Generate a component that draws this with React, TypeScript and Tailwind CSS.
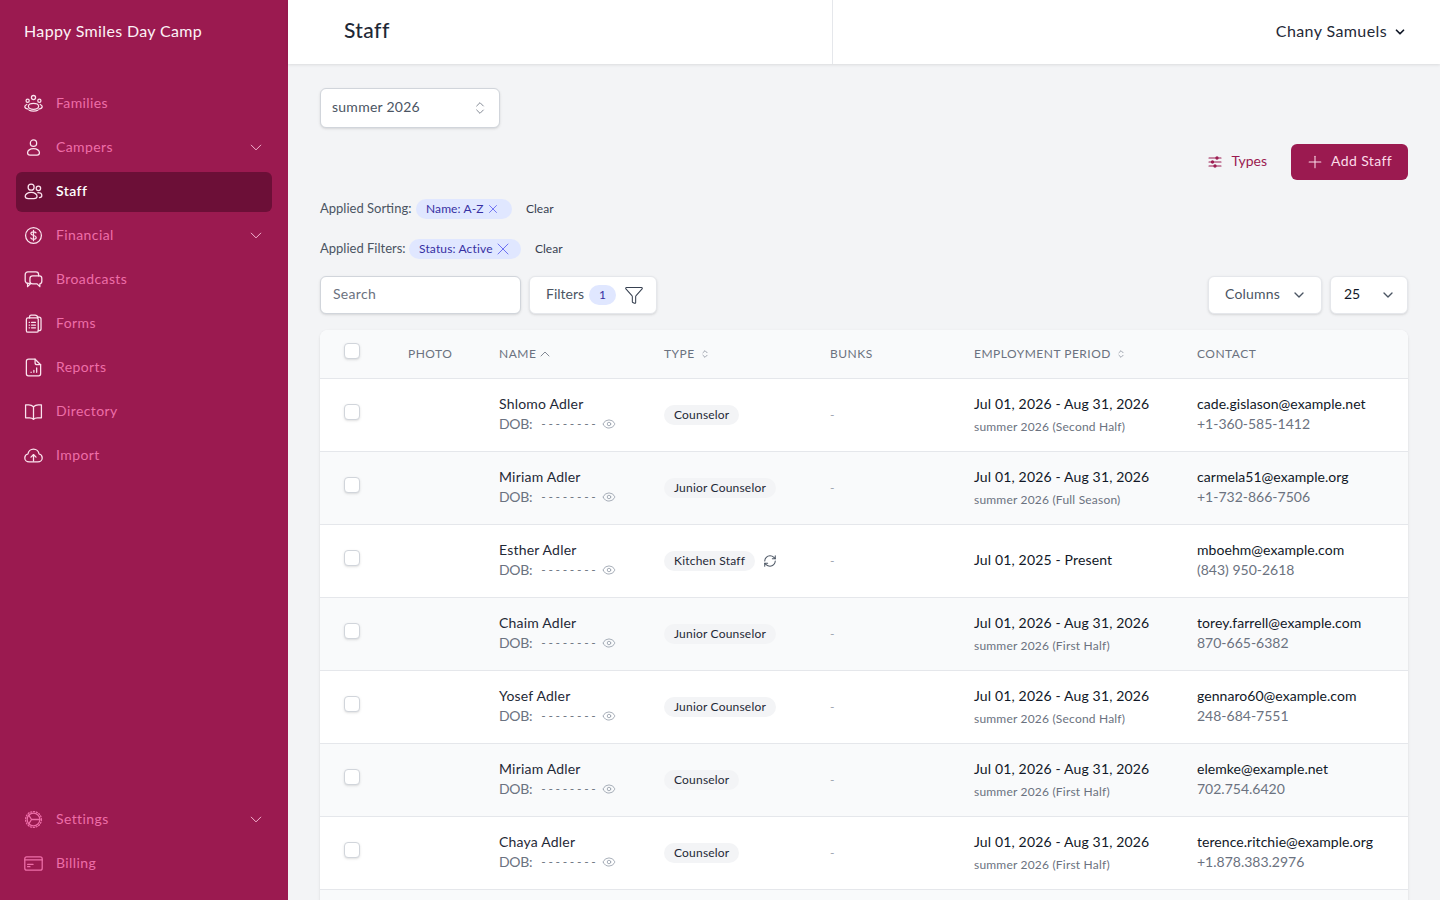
import React from 'react';
import { ChevronDown, ChevronUp, ChevronsUpDown, Eye, Filter, Plus, RefreshCw, X } from 'lucide-react';

const Ico = ({ children }: { children: React.ReactNode }) => (
  <svg viewBox="0 0 24 24" fill="none" stroke="currentColor" strokeWidth="1.6" strokeLinecap="round" strokeLinejoin="round" className="w-[19px] h-[19px]">
    {children}
  </svg>
);

const FamiliesIcon = () => (
  <Ico>
    <circle cx="12" cy="4.500" r="2.600" />
    <circle cx="4.600" cy="8.600" r="2" />
    <circle cx="19.400" cy="8.600" r="2" />
    <ellipse cx="12" cy="15.500" rx="6.500" ry="3.800" />
    <path d="M3.500 13.200C2 14 1 15 1 16c0 1.400 1.800 2.600 4.400 3M20.500 13.200c1.500.8 2.500 1.800 2.500 2.800 0 1.400-1.800 2.600-4.400 3" />
    <path d="M6.500 20.500c1.500.7 3.400 1 5.500 1s4-.3 5.500-1" />
  </Ico>
);
const CampersIcon = () => (
  <Ico>
    <circle cx="12" cy="6.500" r="4" />
    <path d="M12 13.500c-4.500 0-7.500 2.300-7.500 5 0 1.700 1.200 3 3 3h9c1.800 0 3-1.300 3-3 0-2.700-3-5-7.500-5z" />
  </Ico>
);
const StaffIcon = () => (
  <Ico>
    <circle cx="9" cy="6.500" r="3.800" />
    <circle cx="18.200" cy="8" r="2.800" />
    <path d="M9 13.200c-4.400 0-7.500 2.300-7.500 4.800 0 2 1.800 3 4 3h7c2.200 0 4-1 4-3 0-2.500-3.100-4.800-7.500-4.800z" />
    <path d="M17.500 13.500c3 0 5 1.500 5 3.600 0 1.700-1.300 2.600-3 2.700" />
  </Ico>
);
const FinancialIcon = () => (
  <Ico>
    <circle cx="12" cy="12" r="10" />
    <path d="M12 5.500v13M15.200 8.600c-.5-.8-1.700-1.300-3.200-1.300-1.900 0-3.300.9-3.300 2.300 0 3.300 6.700 1.500 6.700 4.800 0 1.400-1.500 2.300-3.400 2.300-1.600 0-2.900-.6-3.400-1.500" />
  </Ico>
);
const BroadcastsIcon = () => (
  <Ico>
    <path d="M7 17H5.500c-2 0-4-1.500-4-3.500V6c0-2 1.500-3.500 3.500-3.500h10c2 0 3.500 1.500 3.500 3.500v1.500" />
    <path d="M4.500 17v4l4-4" />
    <path d="M11 7.500h8.500c1.800 0 3 1.300 3 3.200v3.600c0 1.800-1 3-2.500 3.200v3.500l-3.500-3.500H11c-2 0-3.500-1.200-3.500-3V10.700c0-1.900 1.500-3.200 3.500-3.200z" />
  </Ico>
);
const FormsIcon = () => (
  <Ico>
    <path d="M17 4h2c1.500 0 2.500 1 2.500 2.500v12c0 1.500-1 2.500-2.500 2.500h-1" />
    <rect x="3" y="5" width="15" height="18" rx="2" />
    <path d="M7 5V3.500C7 2.500 8 1.500 9 1.500h5c1.500 0 3 1 3.500 3" />
    <path d="M6.500 10.500h.5M9.500 10.500h5M6.500 14h.5M9.500 14h5M6.500 17.500h.5M9.500 17.500h5" />
  </Ico>
);
const ReportsIcon = () => (
  <Ico>
    <path d="M6 1.500h8l7 7V20c0 1.500-1 2.500-2.500 2.500h-13C4 22.500 3 21.500 3 20V4c0-1.500 1.500-2.500 3-2.500z" />
    <path d="M14 1.500V6c0 1.500 1 2.500 2.500 2.500H21" />
    <path d="M9 18v.2M12.500 15.500V18M16 12.500V18" />
  </Ico>
);
const DirectoryIcon = () => (
  <Ico>
    <path d="M12 6c-1.500-1.500-3.500-2.500-6-2.500H2V20h5c2 0 3.800.5 5 1.800 1.200-1.300 3-1.800 5-1.800h5V3.500h-4c-2.500 0-4.500 1-6 2.500z" />
    <path d="M12 6v15.800" />
  </Ico>
);
const ImportIcon = () => (
  <Ico>
    <path d="M6.500 20C3.500 20 1 17.800 1 15c0-2.400 1.700-4.400 4-4.900C5.500 6.600 8.500 4 12 4s6.500 2.600 7 6.100c2.300.5 4 2.500 4 4.900 0 2.800-2.500 5-5.500 5z" />
    <path d="M12 19v-8M8.800 14l3.200-3.200 3.200 3.200" />
  </Ico>
);
const SettingsIcon = () => (
  <Ico>
    <circle cx="12" cy="12" r="8" />
    <circle cx="12" cy="12" r="10" strokeDasharray="1.400 2.200" />
    <path d="M9.500 12L6 6.500M9.500 12H20M9.500 12L6 17.500" />
  </Ico>
);
const BillingIcon = () => (
  <Ico>
    <rect x="1" y="3.500" width="22" height="17" rx="2.500" />
    <path d="M1 7.500h22M4.500 13h7M4.500 16h3" />
  </Ico>
);

const TypesIcon = () => (
  <svg viewBox="0 0 14 14" fill="none" stroke="currentColor" strokeWidth="1.100" strokeLinecap="round" className="w-[14px] h-[14px] mr-[9px]">
    <path d="M1 3h12M1 7h12M1 11h12" />
    <circle cx="9" cy="3" r="1.100" fill="currentColor" />
    <circle cx="4.500" cy="7" r="1.100" fill="currentColor" />
    <circle cx="7" cy="11" r="1.100" fill="currentColor" />
  </svg>
);

const NavItem = ({ icon, label, open, active, dim }: { icon: React.ReactNode; label: string; open?: boolean; active?: boolean; dim?: boolean }) => (
  <div className={`flex items-center h-10 px-2 rounded-md ${active ? 'bg-[#6c0f37] text-white font-semibold' : 'text-[#ee6ea8]'}`}>
    <span className={`w-8 flex items-center pb-[2px] ${dim ? 'text-[#ee6ea8]' : 'text-[#fbe3ee]'}`}>{icon}</span>
    <span className="text-[14px] tracking-[0.4px] pb-1">{label}</span>
    {open && <ChevronDown className="ml-auto -mr-[2px] w-5 h-5 text-[#f5b5d0] pb-[1px]" strokeWidth={1.25} />}
  </div>
);

type Staff = { name: string; type: string; from: string; season?: string; email: string; phone: string; sync?: boolean };

const staff: Staff[] = [
  { name: 'Shlomo Adler', type: 'Counselor', from: 'Jul 01, 2026 - Aug 31, 2026', season: 'summer 2026 (Second Half)', email: 'cade.gislason@example.net', phone: '+1-360-585-1412' },
  { name: 'Miriam Adler', type: 'Junior Counselor', from: 'Jul 01, 2026 - Aug 31, 2026', season: 'summer 2026 (Full Season)', email: 'carmela51@example.org', phone: '+1-732-866-7506' },
  { name: 'Esther Adler', type: 'Kitchen Staff', sync: true, from: 'Jul 01, 2025 - Present', email: 'mboehm@example.com', phone: '(843) 950-2618' },
  { name: 'Chaim Adler', type: 'Junior Counselor', from: 'Jul 01, 2026 - Aug 31, 2026', season: 'summer 2026 (First Half)', email: 'torey.farrell@example.com', phone: '870-665-6382' },
  { name: 'Yosef Adler', type: 'Junior Counselor', from: 'Jul 01, 2026 - Aug 31, 2026', season: 'summer 2026 (Second Half)', email: 'gennaro60@example.com', phone: '248-684-7551' },
  { name: 'Miriam Adler', type: 'Counselor', from: 'Jul 01, 2026 - Aug 31, 2026', season: 'summer 2026 (First Half)', email: 'elemke@example.net', phone: '702.754.6420' },
  { name: 'Chaya Adler', type: 'Counselor', from: 'Jul 01, 2026 - Aug 31, 2026', season: 'summer 2026 (First Half)', email: 'terence.ritchie@example.org', phone: '+1.878.383.2976' },
];

const Checkbox = () => <div className="w-4 h-4 rounded-[4px] bg-white border border-[#d1d5db] shadow-sm" />;

export default function App() {
  return (
    <div className="flex h-screen overflow-hidden bg-[#f3f4f6] font-['Lato','Liberation_Sans',sans-serif] text-[#111827]">
      {/* Sidebar */}
      <aside className="w-[288px] shrink-0 h-full bg-[#9b1a50] flex flex-col">
        <div className="h-16 flex items-center px-6 text-[16px] text-[#fdf2f7] tracking-[0.35px] shrink-0 pb-[3px]">Happy Smiles Day Camp</div>
        <nav className="flex flex-col gap-1 px-4 pt-5">
          <NavItem icon={<FamiliesIcon />} label="Families" />
          <NavItem icon={<CampersIcon />} label="Campers" open />
          <NavItem icon={<StaffIcon />} label="Staff" active />
          <NavItem icon={<FinancialIcon />} label="Financial" open />
          <NavItem icon={<BroadcastsIcon />} label="Broadcasts" />
          <NavItem icon={<FormsIcon />} label="Forms" />
          <NavItem icon={<ReportsIcon />} label="Reports" />
          <NavItem icon={<DirectoryIcon />} label="Directory" />
          <NavItem icon={<ImportIcon />} label="Import" />
        </nav>
        <div className="mt-auto flex flex-col gap-1 px-4 pb-[16px]">
          <NavItem icon={<SettingsIcon />} label="Settings" open dim />
          <NavItem icon={<BillingIcon />} label="Billing" dim />
        </div>
      </aside>

      <div className="flex-1 min-w-0 h-full flex flex-col">
        {/* Header */}
        <header className="h-16 shrink-0 bg-white shadow-[0_1px_3px_rgba(0,0,0,0.1)] flex items-center z-10">
          <div className="w-[545px] h-full flex items-center pl-14 pb-1 border-r border-[#e5e7eb] text-[21px] font-medium tracking-[0.4px] text-[#1f2937]">Staff</div>
          <div className="ml-auto flex items-center pr-[33px] text-[16px] text-[#1f2937] tracking-[0.4px]">
            <span className="pb-[3px]">Chany Samuels</span>
            <ChevronDown className="ml-[6px] w-[14px] h-[14px] text-[#111827]" strokeWidth={3} />
          </div>
        </header>

        {/* Content */}
        <main className="flex-1 min-h-0 overflow-hidden px-8 pt-6">
          <div className="w-[180px] h-10 bg-white border border-[#d1d5db] rounded-md shadow-sm flex items-center justify-between pl-[11px] pr-[11px] text-[14px] text-[#4b5563] tracking-[0.25px]">
            <span className="pb-1">summer 2026</span>
            <ChevronsUpDown className="w-4 h-4 text-[#6b7280]" strokeWidth={1.25} />
          </div>

          <div className="mt-4 h-9 flex items-center justify-end">
            <div className="flex items-center text-[14px] text-[#9b1a50]">
              <TypesIcon />
              <span className="pb-[3px]">Types</span>
            </div>
            <button className="ml-6 w-[117px] h-9 bg-[#9b1a50] rounded-md flex items-center pl-[14px] text-[14px] text-[#fbdce9] tracking-[0.4px]">
              <Plus className="w-5 h-5 mr-[6px]" strokeWidth={1.25} />
              <span className="pb-[3px]">Add Staff</span>
            </button>
          </div>

          <div className="mt-[17px] h-6 flex items-center text-[13px] text-[#4b5563]">
            <span className="w-[96px]">Applied Sorting:</span>
            <span className="w-[96px] h-5 rounded-full bg-[#e0e7ff] text-[#3730a3] text-[12px] tracking-[0.1px] flex items-center pl-[10px]">
              Name: A-Z
              <X className="w-[14px] h-[14px] ml-[3px] text-[#6366f1]" strokeWidth={1.5} />
            </span>
            <span className="ml-[14px] text-[12px] text-[#374151]">Clear</span>
          </div>
          <div className="mt-4 h-6 flex items-center text-[13px] text-[#4b5563]">
            <span className="w-[89px]">Applied Filters:</span>
            <span className="w-[112px] h-5 rounded-full bg-[#e0e7ff] text-[#3730a3] text-[12px] tracking-[0.15px] flex items-center pl-[10px]">
              Status: Active
              <X className="w-5 h-5 text-[#6366f1]" strokeWidth={1.1} />
            </span>
            <span className="ml-[14px] text-[12px] text-[#374151]">Clear</span>
          </div>

          <div className="mt-[15px] flex items-center h-[38px]">
            <div className="w-[201px] h-full bg-white border border-[#d1d5db] rounded-md shadow-sm flex items-center px-3 text-[14px] text-[#6b7280] tracking-[0.3px]">
              <span className="pb-1">Search</span>
            </div>
            <div className="ml-2 w-[128px] h-full bg-white border border-[#e5e7eb] rounded-md shadow-sm flex items-center pl-4 text-[14px] text-[#4b5563]">
              <span className="pb-1">Filters</span>
              <span className="ml-[5px] w-[27px] h-5 rounded-full bg-[#e0e7ff] text-[#3730a3] text-[12px] flex items-center justify-center">1</span>
              <Filter className="ml-[8px] w-5 h-5 text-[#374151]" strokeWidth={1.25} />
            </div>
            <div className="ml-auto w-[114px] h-full bg-white border border-[#e5e7eb] rounded-md shadow-sm flex items-center justify-between pl-4 pr-[14px] text-[14px] text-[#4b5563] tracking-[0.2px]">
              <span className="pb-1">Columns</span>
              <ChevronDown className="w-4 h-4 text-[#4b5563]" strokeWidth={2} />
            </div>
            <div className="ml-2 w-[78px] h-full bg-white border border-[#e5e7eb] rounded-md shadow-sm flex items-center justify-between pl-[13px] pr-[11px] text-[14px] text-[#111827]">
              <span className="pb-1">25</span>
              <ChevronDown className="w-4 h-4 text-[#4b5563]" strokeWidth={2} />
            </div>
          </div>

          {/* Table */}
          <div className="mt-4 bg-white rounded-lg shadow-sm overflow-hidden">
            <table className="w-full table-fixed border-collapse">
              <colgroup>
                <col className="w-[88px]" />
                <col className="w-[91px]" />
                <col className="w-[165px]" />
                <col className="w-[166px]" />
                <col className="w-[144px]" />
                <col className="w-[223px]" />
                <col />
              </colgroup>
              <thead>
                <tr className="h-12 bg-[#f9fafb] border-b border-[#e5e7eb] text-left text-[12px] text-[#6b7280] tracking-[0.5px]">
                  <th className="pl-6 font-normal pb-[6px]"><Checkbox /></th>
                  <th className="font-normal">PHOTO</th>
                  <th className="font-normal">
                    <span className="flex items-center">NAME<ChevronUp className="ml-[1px] w-4 h-4" strokeWidth={1.25} /></span>
                  </th>
                  <th className="font-normal">
                    <span className="flex items-center">TYPE<ChevronsUpDown className="ml-[5px] w-[10px] h-[10px]" strokeWidth={1.5} /></span>
                  </th>
                  <th className="font-normal">BUNKS</th>
                  <th className="font-normal">
                    <span className="flex items-center">EMPLOYMENT PERIOD<ChevronsUpDown className="ml-[5px] w-[10px] h-[10px]" strokeWidth={1.5} /></span>
                  </th>
                  <th className="font-normal">CONTACT</th>
                </tr>
              </thead>
              <tbody>
                {staff.map((s, i) => (
                  <tr key={i} className={`h-[73px] border-b border-[#e5e7eb] ${i % 2 === 1 ? 'bg-[#f9fafb]' : 'bg-white'}`}>
                    <td className="pl-6 pb-[6px]"><Checkbox /></td>
                    <td />
                    <td className="pb-[2px]">
                      <div className="text-[14px] leading-5 text-[#1f2937] tracking-[0.2px]">{s.name}</div>
                      <div className="flex items-center text-[14px] leading-5 text-[#6b7280]">
                        <span className="tracking-[-0.3px]">DOB:</span>
                        <span className="ml-[9px] text-[12px] tracking-[2.7px]">--------</span>
                        <Eye className="ml-[4px] mt-[1px] w-[14px] h-[14px] text-[#9ca3af]" strokeWidth={1.5} />
                      </div>
                    </td>
                    <td>
                      <div className="flex items-center">
                        <span className="h-5 px-[10px] rounded-full bg-[#f3f4f6] text-[12px] text-[#1f2937] tracking-[0.2px] flex items-center">{s.type}</span>
                        {s.sync && <RefreshCw className="ml-[8px] w-[14px] h-[14px] text-[#4b5563]" strokeWidth={1.75} />}
                      </div>
                    </td>
                    <td className="text-[12px] text-[#9ca3af]">-</td>
                    <td className="pb-[1px]">
                      <div className="text-[14px] leading-5 text-[#111827] tracking-[0.15px]">{s.from}</div>
                      {s.season && <div className="mt-[5px] text-[12px] leading-4 text-[#6b7280] tracking-[0.2px]">{s.season}</div>}
                    </td>
                    <td className="pb-[2px]">
                      <div className="text-[14px] leading-5 text-[#111827] tracking-[0.05px]">{s.email}</div>
                      <div className="text-[14px] leading-5 text-[#6b7280]">{s.phone}</div>
                    </td>
                  </tr>
                ))}
                <tr className="h-[73px] bg-[#f9fafb]"><td colSpan={7} /></tr>
              </tbody>
            </table>
          </div>
        </main>
      </div>
    </div>
  );
}
